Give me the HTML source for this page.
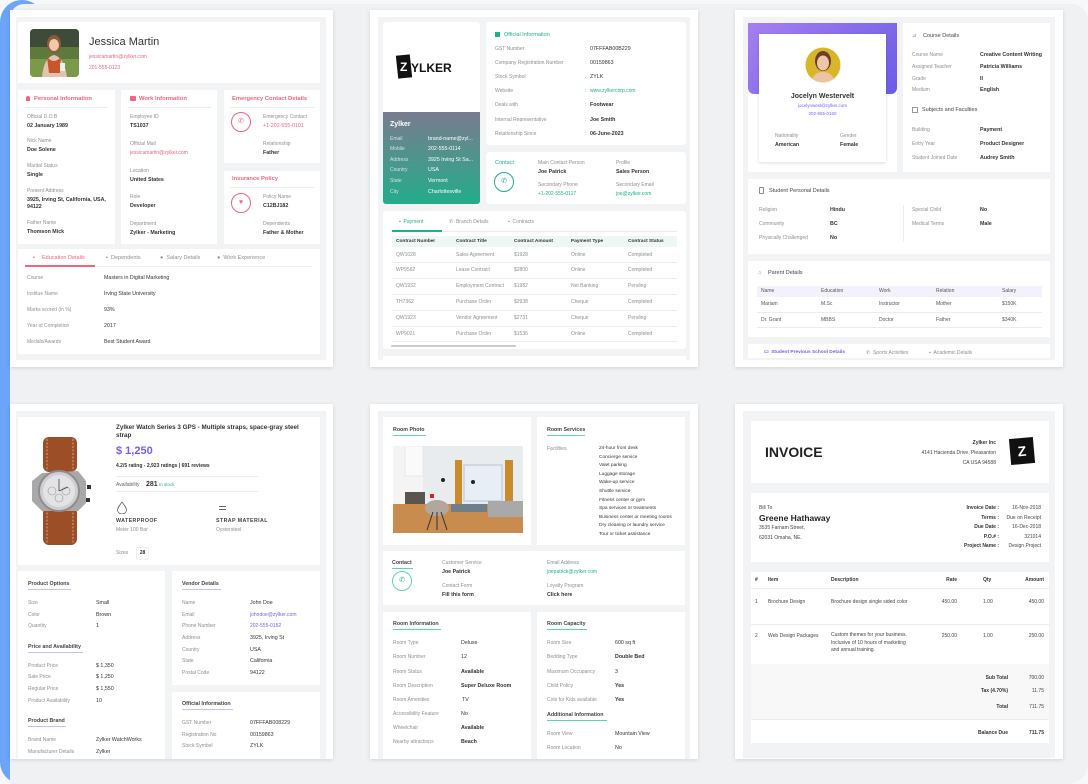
<!DOCTYPE html>
<html><head><meta charset="utf-8">
<style>
*{margin:0;padding:0;box-sizing:border-box}
body{width:1088px;height:784px;position:relative;overflow:hidden;background:#f7f8fa;font-family:"Liberation Sans",sans-serif;color:#333}
.a{position:absolute}
.t{position:absolute;white-space:nowrap;line-height:8px}
.l{font-size:5px;color:#8f8f8f}
.v{font-size:5.3px;color:#333;font-weight:bold}
.pk{color:#f2647d}
.gr{color:#1fb08b}
.pu{color:#7b5cf0}
.w{position:absolute;background:#fff}
.card{position:absolute;background:#fff;box-shadow:0 1px 4px rgba(0,0,0,.12)}
.in{position:absolute;background:#f2f3f4}
.h{font-size:5.8px;font-weight:bold}
.ul{position:absolute;height:1px}
.hl{position:absolute;height:1px;background:#ececec}
</style></head><body>
<div class="a" style="left:0;top:0;width:44px;height:784px;background:#6ba4f9;border-radius:24px"></div>
<div class="a" style="left:10px;top:4px;right:0;bottom:0;background:#f0f1f3;border-radius:14px 16px 20px 0"></div>

<!-- CARD 1 -->
<div class="card" style="left:10px;top:10px;width:323px;height:357px"></div>
<div class="in" style="left:16px;top:17px;width:310px;height:343px"></div>
<div class="w" style="left:18px;top:22px;width:302px;height:61px"></div>
<svg class="a" style="left:30px;top:29px" width="49" height="48"><defs><clipPath id="c1"><rect width="49" height="48" rx="4"/></clipPath></defs><g clip-path="url(#c1)"><rect width="49" height="48" fill="#5d7a3c"/><rect width="49" height="18" fill="#3f4b3a"/><rect x="0" y="30" width="49" height="18" fill="#7a9a4a"/><path d="M12 48 Q14 28 24 26 Q34 28 37 48Z" fill="#e3c2ae"/><ellipse cx="24" cy="15" rx="7" ry="9" fill="#8b5a3a"/><ellipse cx="24" cy="16" rx="5" ry="6" fill="#f1c9a8"/><path d="M17 28 Q24 36 31 28 L30 44 L19 44Z" fill="#c9552e"/><rect x="30" y="34" width="5" height="8" fill="#eee"/></g></svg>
<div class="t" style="left:89px;top:35px;font-size:11px;line-height:14px;color:#333">Jessica Martin</div>
<div class="t l pk" style="left:89px;top:53px">jessicamartin@zylker.com</div>
<div class="t l pk" style="left:89px;top:64px">201-555-0123</div>

<div class="w" style="left:18px;top:90px;width:97px;height:154px"></div>
<div class="w" style="left:121px;top:90px;width:96px;height:154px"></div>
<div class="w" style="left:224px;top:90px;width:96px;height:73px"></div>
<div class="w" style="left:224px;top:171px;width:96px;height:73px"></div>
<div class="a" style="left:26px;top:96px;width:4px;height:5px;background:#f2647d;border-radius:2px 2px 0 0"></div>
<div class="t h pk" style="left:34px;top:95px">Personal Information</div>
<div class="hl" style="left:25px;top:107px;width:83px"></div>
<div class="t l" style="left:27px;top:113px">Official D.O.B</div><div class="t v" style="left:27px;top:122px">02 January 1989</div>
<div class="t l" style="left:27px;top:137px">Nick Name</div><div class="t v" style="left:27px;top:146px">Doe Solene</div>
<div class="t l" style="left:27px;top:162px">Marital Status</div><div class="t v" style="left:27px;top:171px">Single</div>
<div class="t l" style="left:27px;top:187px">Present Address</div><div class="t v" style="left:27px;top:196px">3925, Irving St, California, USA,</div><div class="t v" style="left:27px;top:203px">94122</div>
<div class="t l" style="left:27px;top:219px">Father Name</div><div class="t v" style="left:27px;top:228px">Thomson Mick</div>

<div class="a" style="left:130px;top:96px;width:6px;height:5px;background:#f2647d;border-radius:1px"></div>
<div class="t h pk" style="left:139px;top:95px">Work Information</div>
<div class="hl" style="left:128px;top:107px;width:83px"></div>
<div class="t l" style="left:130px;top:113px">Employee ID</div><div class="t v" style="left:130px;top:122px">TS1037</div>
<div class="t l" style="left:130px;top:140px">Official Mail</div><div class="t l pk" style="left:130px;top:149px">jessicamartin@zylker.com</div>
<div class="t l" style="left:130px;top:167px">Location</div><div class="t v" style="left:130px;top:176px">United States</div>
<div class="t l" style="left:130px;top:193px">Role</div><div class="t v" style="left:130px;top:202px">Developer</div>
<div class="t l" style="left:130px;top:220px">Department</div><div class="t v" style="left:130px;top:229px">Zylker - Marketing</div>

<div class="t h pk" style="left:232px;top:95px">Emergency Contact Details</div>
<div class="hl" style="left:230px;top:107px;width:84px"></div>
<div class="a" style="left:231px;top:112px;width:20px;height:20px;border:1px solid #f2647d;border-radius:50%;color:#f2647d;font-size:7px;text-align:center;line-height:18px">✆</div>
<div class="t l" style="left:263px;top:113px">Emergency Contact</div><div class="t l pk" style="left:263px;top:122px;font-size:5.3px">+1-202-555-0101</div>
<div class="t l" style="left:263px;top:140px">Relationship</div><div class="t v" style="left:263px;top:149px">Father</div>
<div class="t h pk" style="left:232px;top:175px">Insurance Policy</div>
<div class="hl" style="left:230px;top:187px;width:84px"></div>
<div class="a" style="left:231px;top:193px;width:20px;height:20px;border:1px solid #f2647d;border-radius:50%;color:#f2647d;font-size:7px;text-align:center;line-height:18px">♥</div>
<div class="t l" style="left:263px;top:193px">Policy Name</div><div class="t v" style="left:263px;top:202px">C12BJ182</div>
<div class="t l" style="left:263px;top:220px">Dependents</div><div class="t v" style="left:263px;top:229px">Father &amp; Mother</div>

<div class="w" style="left:18px;top:249px;width:302px;height:105px"></div>
<div class="t l pk" style="left:33px;top:254px;font-size:5.5px">▪</div>
<div class="t pk" style="left:42px;top:254px;font-size:5.5px">Education Details</div>
<div class="t l" style="left:106px;top:254px;font-size:5.5px">▪ &nbsp;Dependents</div>
<div class="t l" style="left:160px;top:254px;font-size:5.5px">● &nbsp;Salary Details</div>
<div class="t l" style="left:217px;top:254px;font-size:5.5px">● &nbsp;Work Experience</div>
<div class="hl" style="left:25px;top:266px;width:287px"></div>
<div class="ul" style="left:25px;top:265px;width:70px;height:1.5px;background:#f2647d"></div>
<div class="t l" style="left:27px;top:274px">Course</div><div class="t v" style="left:104px;top:274px;font-weight:normal;color:#333">Masters in Digital Marketing</div>
<div class="t l" style="left:27px;top:290px">Institue Name</div><div class="t v" style="left:104px;top:290px;font-weight:normal">Irving State University</div>
<div class="t l" style="left:27px;top:306px">Marks scored (in %)</div><div class="t v" style="left:104px;top:306px;font-weight:normal">93%</div>
<div class="t l" style="left:27px;top:322px">Year of Completion</div><div class="t v" style="left:104px;top:322px;font-weight:normal">2017</div>
<div class="t l" style="left:27px;top:338px">Medals/Awards</div><div class="t v" style="left:104px;top:338px;font-weight:normal">Best Student Award</div>

<!-- CARD 2 -->
<div class="card" style="left:370px;top:10px;width:328px;height:357px"></div>
<div class="in" style="left:378px;top:17px;width:312px;height:343px"></div>
<div class="w" style="left:383px;top:22px;width:97px;height:182px;border-radius:3px;overflow:hidden"><div class="a" style="left:0;top:90px;width:97px;height:92px;background:linear-gradient(#7a7b8e,#22ad8c)"></div></div>
<div class="a" style="left:397px;top:55px;width:14px;height:23px;background:#111;transform:rotate(-6deg)"></div>
<div class="t" style="left:400px;top:60px;font-size:12px;line-height:14px;color:#fff;font-weight:bold">Z</div>
<div class="t" style="left:411px;top:61px;font-size:12px;line-height:14px;color:#111;font-weight:bold">YLKER</div>
<div class="t" style="left:390px;top:121px;font-size:7px;color:#fff;font-weight:bold">Zylker</div>
<div class="t l" style="left:390px;top:135px;color:#dde">Email</div><div class="t" style="left:428px;top:135px;font-size:5.3px;color:#fff">brand-name@zyl...</div>
<div class="t l" style="left:390px;top:145px;color:#dde">Mobile</div><div class="t" style="left:428px;top:145px;font-size:5.3px;color:#fff">202-555-0114</div>
<div class="t l" style="left:390px;top:156px;color:#dde">Address</div><div class="t" style="left:428px;top:156px;font-size:5.3px;color:#fff">3925 Irving St Sa...</div>
<div class="t l" style="left:390px;top:166px;color:#dde">Country</div><div class="t" style="left:428px;top:166px;font-size:5.3px;color:#fff">USA</div>
<div class="t l" style="left:390px;top:177px;color:#dde">State</div><div class="t" style="left:428px;top:177px;font-size:5.3px;color:#fff">Vermont</div>
<div class="t l" style="left:390px;top:188px;color:#dde">City</div><div class="t" style="left:428px;top:188px;font-size:5.3px;color:#fff">Charlottesville</div>

<div class="w" style="left:486px;top:22px;width:200px;height:123px;border-radius:3px"></div>
<div class="a" style="left:495px;top:32px;width:5px;height:5px;background:#1fb08b"></div>
<div class="t gr" style="left:504px;top:31px;font-size:5.5px">Official Information</div>
<div class="t l" style="left:495px;top:45px">GST Number</div><div class="t l" style="left:585px;top:45px">:</div><div class="t v" style="left:590px;top:45px;font-weight:normal">07FFFAB00B229</div>
<div class="t l" style="left:495px;top:59px">Company Registration Number</div><div class="t l" style="left:585px;top:59px">:</div><div class="t v" style="left:590px;top:59px;font-weight:normal">00159863</div>
<div class="t l" style="left:495px;top:73px">Stock Symbol</div><div class="t l" style="left:585px;top:73px">:</div><div class="t v" style="left:590px;top:73px;font-weight:normal">ZYLK</div>
<div class="t l" style="left:495px;top:87px">Website</div><div class="t l" style="left:585px;top:87px">:</div><div class="t l gr" style="left:590px;top:87px">www.zylkercorp.com</div>
<div class="t l" style="left:495px;top:101px">Deals with</div><div class="t l" style="left:585px;top:101px">:</div><div class="t v" style="left:590px;top:101px">Footwear</div>
<div class="t l" style="left:495px;top:116px">Internal Representative</div><div class="t l" style="left:585px;top:116px">:</div><div class="t v" style="left:590px;top:116px">Joe Smith</div>
<div class="t l" style="left:495px;top:130px">Relationship Since</div><div class="t l" style="left:585px;top:130px">:</div><div class="t v" style="left:590px;top:130px">06-June-2023</div>

<div class="w" style="left:486px;top:152px;width:200px;height:52px;border-radius:3px"></div>
<div class="t gr" style="left:495px;top:159px;font-size:5.5px">Contact</div>
<div class="a" style="left:494px;top:172px;width:20px;height:20px;border:1px solid #1fb08b;border-radius:50%;color:#1fb08b;font-size:7px;text-align:center;line-height:18px">✆</div>
<div class="t l" style="left:538px;top:159px">Main Contact Person</div><div class="t v" style="left:538px;top:168px">Joe Patrick</div>
<div class="t l" style="left:538px;top:181px">Secondary Phone</div><div class="t l gr" style="left:538px;top:190px">+1-202-555-0117</div>
<div class="t l" style="left:616px;top:159px">Profile</div><div class="t v" style="left:616px;top:168px">Sales Person</div>
<div class="t l" style="left:616px;top:181px">Secondary Email</div><div class="t l gr" style="left:616px;top:190px">joe@zylker.com</div>

<div class="w" style="left:383px;top:211px;width:303px;height:138px;border-radius:3px"></div>
<div class="t gr" style="left:399px;top:218px;font-size:5px">▪ &nbsp;Payment</div>
<div class="t l" style="left:449px;top:218px">✆ &nbsp;Branch Details</div>
<div class="t l" style="left:508px;top:218px">▪ &nbsp;Contracts</div>
<div class="hl" style="left:392px;top:231px;width:285px"></div>
<div class="ul" style="left:392px;top:230px;width:50px;height:1.5px;background:#1fb08b"></div>
<div class="a" style="left:392px;top:236px;width:285px;height:11px;background:#eef7f4"></div>
<div class="t v" style="left:396px;top:238px;font-size:4.8px">Contract Number</div><div class="t v" style="left:456px;top:238px;font-size:4.8px">Contract Title</div><div class="t v" style="left:514px;top:238px;font-size:4.8px">Contract Amount</div><div class="t v" style="left:571px;top:238px;font-size:4.8px">Payment Type</div><div class="t v" style="left:628px;top:238px;font-size:4.8px">Contract Status</div>
<div class="t l" style="left:396px;top:251px">QW1028</div><div class="t l" style="left:456px;top:251px">Sales Agreement</div><div class="t l" style="left:514px;top:251px">$1928</div><div class="t l" style="left:571px;top:251px">Online</div><div class="t l" style="left:628px;top:251px">Completed</div>
<div class="hl" style="left:392px;top:262px;width:285px"></div>
<div class="t l" style="left:396px;top:266px">WP9562</div><div class="t l" style="left:456px;top:266px">Lease Contract</div><div class="t l" style="left:514px;top:266px">$2800</div><div class="t l" style="left:571px;top:266px">Online</div><div class="t l" style="left:628px;top:266px">Completed</div>
<div class="hl" style="left:392px;top:278px;width:285px"></div>
<div class="t l" style="left:396px;top:282px">QW1932</div><div class="t l" style="left:456px;top:282px">Employment Contract</div><div class="t l" style="left:514px;top:282px">$1982</div><div class="t l" style="left:571px;top:282px">Net Banking</div><div class="t l" style="left:628px;top:282px">Pending</div>
<div class="hl" style="left:392px;top:294px;width:285px"></div>
<div class="t l" style="left:396px;top:298px">TH7362</div><div class="t l" style="left:456px;top:298px">Purchase Order</div><div class="t l" style="left:514px;top:298px">$2938</div><div class="t l" style="left:571px;top:298px">Cheque</div><div class="t l" style="left:628px;top:298px">Completed</div>
<div class="hl" style="left:392px;top:310px;width:285px"></div>
<div class="t l" style="left:396px;top:314px">QW1923</div><div class="t l" style="left:456px;top:314px">Vendor Agreement</div><div class="t l" style="left:514px;top:314px">$2731</div><div class="t l" style="left:571px;top:314px">Cheque</div><div class="t l" style="left:628px;top:314px">Pending</div>
<div class="hl" style="left:392px;top:326px;width:285px"></div>
<div class="t l" style="left:396px;top:330px">WP9021</div><div class="t l" style="left:456px;top:330px">Purchase Order</div><div class="t l" style="left:514px;top:330px">$1536</div><div class="t l" style="left:571px;top:330px">Online</div><div class="t l" style="left:628px;top:330px">Completed</div>
<div class="hl" style="left:392px;top:341px;width:285px"></div>
<div class="a" style="left:391px;top:345px;width:125px;height:2px;background:#ccc;border-radius:1px"></div>
<div class="w" style="left:383px;top:356px;width:303px;height:4px"></div>

<!-- CARD 3 -->
<div class="card" style="left:735px;top:10px;width:328px;height:357px"></div>
<div class="in" style="left:743px;top:17px;width:312px;height:343px"></div>
<div class="w" style="left:748px;top:23px;width:149px;height:149px"></div>
<div class="a" style="left:748px;top:23px;width:149px;height:71px;background:linear-gradient(135deg,#a57ff2,#6b5ce6);border-radius:0 0 6px 6px"></div>
<div class="w" style="left:759px;top:34px;width:127px;height:128px;box-shadow:0 1px 3px rgba(0,0,0,.15)"></div>
<svg class="a" style="left:805px;top:47px" width="36" height="36"><defs><clipPath id="c2"><circle cx="18" cy="18" r="17.5"/></clipPath></defs><g clip-path="url(#c2)"><rect width="36" height="36" fill="#d9b52a"/><ellipse cx="18" cy="14" rx="8" ry="10" fill="#6b4028"/><ellipse cx="18" cy="16" rx="6" ry="7.5" fill="#efc7a8"/><path d="M6 36 Q8 25 18 25 Q28 25 30 36Z" fill="#edc3a2"/></g></svg>
<div class="t" style="left:759px;top:93px;width:127px;text-align:center;font-size:7px;font-weight:bold;color:#333">Jocelyn Westervelt</div>
<div class="t l pu" style="left:759px;top:102px;width:127px;text-align:center;font-size:4.5px">jocelynwest@zylker.com</div>
<div class="t l pu" style="left:759px;top:110px;width:127px;text-align:center;font-size:4.5px">202-555-0160</div>
<div class="t l" style="left:775px;top:132px">Nationality</div><div class="t v" style="left:775px;top:141px">American</div>
<div class="t l" style="left:840px;top:132px">Gender</div><div class="t v" style="left:840px;top:141px">Female</div>

<div class="w" style="left:903px;top:23px;width:147px;height:149px"></div>
<div class="t l" style="left:912px;top:32px;font-size:5.5px">⊿</div>
<div class="t" style="left:923px;top:32px;font-size:5.5px;color:#444">Course Details</div>
<div class="t l" style="left:912px;top:51px">Course Name</div><div class="t v" style="left:980px;top:51px">Creative Content Writing</div>
<div class="t l" style="left:912px;top:63px">Assigned Teacher</div><div class="t v" style="left:980px;top:63px">Patricia Williams</div>
<div class="t l" style="left:912px;top:75px">Grade</div><div class="t v" style="left:980px;top:75px">II</div>
<div class="t l" style="left:912px;top:86px">Medium</div><div class="t v" style="left:980px;top:86px">English</div>
<div class="a" style="left:912px;top:107px;width:6px;height:6px;border:1px solid #999"></div>
<div class="t" style="left:922px;top:106px;font-size:5.5px;color:#444">Subjects and Faculties</div>
<div class="t l" style="left:912px;top:126px">Building</div><div class="t v" style="left:980px;top:126px">Payment</div>
<div class="t l" style="left:912px;top:140px">Entry Year</div><div class="t v" style="left:980px;top:140px">Product Designer</div>
<div class="t l" style="left:912px;top:154px">Student Joined Date</div><div class="t v" style="left:980px;top:154px">Audrey Smith</div>

<div class="w" style="left:748px;top:179px;width:302px;height:75px"></div>
<div class="a" style="left:759px;top:187px;width:5px;height:7px;border:1px solid #888;border-radius:1px"></div>
<div class="t" style="left:769px;top:187px;font-size:5.5px;color:#444">Student Personal Details</div>
<div class="t l" style="left:759px;top:206px">Religion</div><div class="t v" style="left:830px;top:206px">Hindu</div>
<div class="t l" style="left:759px;top:220px">Community</div><div class="t v" style="left:830px;top:220px">BC</div>
<div class="t l" style="left:759px;top:234px">Physically Challenged</div><div class="t v" style="left:830px;top:234px">No</div>
<div class="a" style="left:903px;top:205px;width:1px;height:37px;background:#eee"></div>
<div class="t l" style="left:912px;top:206px">Special Child</div><div class="t v" style="left:980px;top:206px">No</div>
<div class="t l" style="left:912px;top:220px">Medical Terms</div><div class="t v" style="left:980px;top:220px">Male</div>

<div class="w" style="left:748px;top:261px;width:302px;height:76px"></div>
<div class="t l" style="left:758px;top:269px;font-size:5.5px">⌂</div>
<div class="t" style="left:768px;top:269px;font-size:5.5px;color:#444">Parent Details</div>
<div class="a" style="left:757px;top:286px;width:285px;height:11px;background:#f3f1fd"></div>
<div class="t l" style="left:761px;top:287px;color:#555">Name</div><div class="t l" style="left:821px;top:287px;color:#555">Education</div><div class="t l" style="left:879px;top:287px;color:#555">Work</div><div class="t l" style="left:936px;top:287px;color:#555">Relation</div><div class="t l" style="left:1002px;top:287px;color:#555">Salary</div>
<div class="t l" style="left:761px;top:300px;color:#555">Mariam</div><div class="t l" style="left:821px;top:300px;color:#555">M.Sc</div><div class="t l" style="left:879px;top:300px;color:#555">Instructor</div><div class="t l" style="left:936px;top:300px;color:#555">Mother</div><div class="t l" style="left:1002px;top:300px;color:#555">$150K</div>
<div class="hl" style="left:757px;top:312px;width:285px"></div>
<div class="t l" style="left:761px;top:316px;color:#555">Dr. Grant</div><div class="t l" style="left:821px;top:316px;color:#555">MBBS</div><div class="t l" style="left:879px;top:316px;color:#555">Doctor</div><div class="t l" style="left:936px;top:316px;color:#555">Father</div><div class="t l" style="left:1002px;top:316px;color:#555">$340K</div>
<div class="hl" style="left:757px;top:327px;width:285px"></div>
<div class="w" style="left:748px;top:344px;width:302px;height:14px"></div>
<div class="t pu" style="left:764px;top:349px;font-size:4.8px;font-weight:bold">▭ &nbsp;Student Previous School Details</div>
<div class="t l" style="left:866px;top:349px">✆ &nbsp;Sports Activities</div>
<div class="t l" style="left:929px;top:349px">▪ &nbsp;Academic Details</div>

<!-- CARD 4 -->
<div class="card" style="left:10px;top:404px;width:323px;height:355px"></div>
<div class="in" style="left:16px;top:411px;width:310px;height:348px"></div>
<div class="w" style="left:18px;top:417px;width:302px;height:148px"></div>
<svg class="a" style="left:28px;top:435px" width="70" height="112">
<rect x="15" y="2" width="34" height="35" rx="6" fill="#9c4f27"/><rect x="15" y="72" width="34" height="38" rx="6" fill="#9c4f27"/>
<path d="M19 4 V36 M45 4 V36 M19 74 V108 M45 74 V108" stroke="#e9c6a5" stroke-width=".7" stroke-dasharray="2 1.5"/>
<path d="M14 38 L50 36 L58 46 L58 68 L50 76 L14 76 L4 66 L4 46Z" fill="#a8a8ab"/>
<circle cx="31" cy="56" r="20" fill="#cfcfd1" stroke="#8d8d90" stroke-width="2"/>
<circle cx="31" cy="56" r="16" fill="#e3e3e5"/>
<circle cx="24" cy="56" r="4" fill="none" stroke="#999" stroke-width=".6"/><circle cx="38" cy="56" r="4" fill="none" stroke="#999" stroke-width=".6"/><circle cx="31" cy="63" r="4" fill="none" stroke="#999" stroke-width=".6"/>
<path d="M31 56 L31 44 M31 56 L40 52" stroke="#444" stroke-width=".8"/>
<rect x="59" y="50" width="4" height="4" fill="#333"/><rect x="58" y="63" width="4" height="4" fill="#333"/><rect x="59" y="32" width="0" height="0"/></svg>
<div class="t" style="left:116px;top:424px;font-size:6.3px;font-weight:bold;color:#333;line-height:8px">Zylker Watch Series 3 GPS - Multiple straps, space-gray steel<br>strap</div>
<div class="t pu" style="left:116px;top:444px;font-size:11px;line-height:14px;font-weight:bold">$ 1,250</div>
<div class="t v" style="left:116px;top:462px;font-size:5px">4.2/5 rating - 2,923 ratings | 691 reviews</div>
<div class="hl" style="left:116px;top:476px;width:142px"></div>
<div class="t l" style="left:116px;top:481px;color:#666">Availability</div>
<div class="t v" style="left:146px;top:480px;font-size:7px;line-height:9px">281</div>
<div class="t l gr" style="left:159px;top:481px;font-size:4.5px">In stock</div>
<div class="hl" style="left:116px;top:491px;width:142px"></div>
<svg class="a" style="left:116px;top:501px" width="12" height="13"><path d="M6 1 C3 5 1.5 7 1.5 9 A4.5 4 0 0 0 10.5 9 C10.5 7 9 5 6 1Z" fill="none" stroke="#666" stroke-width=".8"/></svg>
<div class="a" style="left:219px;top:506px;width:7px;height:1px;background:#666"></div><div class="a" style="left:219px;top:509px;width:7px;height:1px;background:#666"></div>
<div class="t v" style="left:116px;top:517px;font-size:5.3px;letter-spacing:.4px;color:#444">WATERPROOF</div>
<div class="t l" style="left:116px;top:526px">Meter 100 Bar</div>
<div class="t v" style="left:216px;top:517px;font-size:5.3px;letter-spacing:.4px;color:#444">STRAP MATERIAL</div>
<div class="t l" style="left:216px;top:526px">Oystersteel</div>
<div class="t l" style="left:116px;top:549px">Sizes</div>
<div class="a" style="left:136px;top:547px;width:13px;height:13px;border:1px solid #eee;border-radius:2px;font-size:5px;font-weight:bold;text-align:center;line-height:11px">28</div>

<div class="w" style="left:18px;top:571px;width:147px;height:188px"></div>
<div class="w" style="left:172px;top:571px;width:148px;height:114px"></div>
<div class="w" style="left:172px;top:692px;width:148px;height:67px"></div>
<div class="t v" style="left:28px;top:580px;color:#444">Product Options</div><div class="ul" style="left:28px;top:589px;width:43px;background:#cbbcf8"></div>
<div class="t l" style="left:28px;top:599px">Size</div><div class="t v" style="left:96px;top:599px;font-weight:normal">Small</div>
<div class="t l" style="left:28px;top:611px">Color</div><div class="t v" style="left:96px;top:611px;font-weight:normal">Brown</div>
<div class="t l" style="left:28px;top:622px">Quantity</div><div class="t v" style="left:96px;top:622px;font-weight:normal">1</div>
<div class="t v" style="left:28px;top:643px;color:#444">Price and Availability</div><div class="ul" style="left:28px;top:652px;width:55px;background:#cbbcf8"></div>
<div class="t l" style="left:28px;top:662px">Product Price</div><div class="t v" style="left:96px;top:662px;font-weight:normal">$ 1,350</div>
<div class="t l" style="left:28px;top:673px">Sale Price</div><div class="t v" style="left:96px;top:673px;font-weight:normal">$ 1,250</div>
<div class="t l" style="left:28px;top:685px">Regular Price</div><div class="t v" style="left:96px;top:685px;font-weight:normal">$ 1,550</div>
<div class="t l" style="left:28px;top:697px">Product Availability</div><div class="t v" style="left:96px;top:697px;font-weight:normal">10</div>
<div class="t v" style="left:28px;top:717px;color:#444">Product Brand</div><div class="ul" style="left:28px;top:726px;width:38px;background:#cbbcf8"></div>
<div class="t l" style="left:28px;top:736px">Brand Name</div><div class="t v" style="left:96px;top:736px;font-weight:normal">Zylker WatchWorks</div>
<div class="t l" style="left:28px;top:748px">Manufacturer Details</div><div class="t v" style="left:96px;top:748px;font-weight:normal">Zylker</div>

<div class="t v" style="left:182px;top:580px;color:#444">Vendor Details</div><div class="ul" style="left:182px;top:589px;width:39px;background:#cbbcf8"></div>
<div class="t l" style="left:182px;top:599px">Name</div><div class="t v" style="left:250px;top:599px;font-weight:normal">John Doe</div>
<div class="t l" style="left:182px;top:611px">Email</div><div class="t l pu" style="left:250px;top:611px">johndoe@zylker.com</div>
<div class="t l" style="left:182px;top:622px">Phone Number</div><div class="t l pu" style="left:250px;top:622px">202-555-0152</div>
<div class="t l" style="left:182px;top:634px">Address</div><div class="t v" style="left:250px;top:634px;font-weight:normal">3925, Irving St</div>
<div class="t l" style="left:182px;top:646px">Country</div><div class="t v" style="left:250px;top:646px;font-weight:normal">USA</div>
<div class="t l" style="left:182px;top:657px">State</div><div class="t v" style="left:250px;top:657px;font-weight:normal">California</div>
<div class="t l" style="left:182px;top:669px">Postal Code</div><div class="t v" style="left:250px;top:669px;font-weight:normal">94122</div>
<div class="t v" style="left:182px;top:700px;color:#444">Official Information</div><div class="ul" style="left:182px;top:709px;width:51px;background:#cbbcf8"></div>
<div class="t l" style="left:182px;top:719px">GST Number</div><div class="t v" style="left:250px;top:719px;font-weight:normal">07FFFAB008229</div>
<div class="t l" style="left:182px;top:731px">Registration No</div><div class="t v" style="left:250px;top:731px;font-weight:normal">00159863</div>
<div class="t l" style="left:182px;top:742px">Stock Symbol</div><div class="t v" style="left:250px;top:742px;font-weight:normal">ZYLK</div>

<!-- CARD 5 -->
<div class="card" style="left:370px;top:404px;width:328px;height:355px"></div>
<div class="in" style="left:378px;top:411px;width:312px;height:348px"></div>
<div class="w" style="left:383px;top:417px;width:148px;height:128px"></div>
<div class="w" style="left:537px;top:417px;width:148px;height:128px"></div>
<div class="t v" style="left:393px;top:426px;color:#444">Room Photo</div><div class="ul" style="left:393px;top:435px;width:33px;background:#5fd3b6"></div>
<svg class="a" style="left:393px;top:446px" width="130" height="87">
<rect width="130" height="87" fill="#e9ecef"/>
<rect x="0" y="0" width="30" height="60" fill="#f4f4f4"/><rect x="12" y="0" width="18" height="30" fill="#fafafa" stroke="#ddd" stroke-width=".5"/>
<rect x="12" y="46" width="20" height="13" fill="#5a5550"/>
<rect x="70" y="18" width="40" height="38" fill="#cfd8e2"/><rect x="72" y="20" width="36" height="34" fill="#e7eef5"/>
<rect x="62" y="14" width="7" height="46" fill="#c98b2b"/><rect x="112" y="14" width="8" height="46" fill="#c98b2b"/>
<rect x="0" y="58" width="130" height="29" fill="#c88c4e"/>
<rect x="95" y="55" width="35" height="16" fill="#a9a9a9"/><rect x="58" y="58" width="36" height="8" fill="#6e7f8c"/>
<ellipse cx="44" cy="62" rx="12" ry="8" fill="#b1a79e"/><path d="M40 66 L34 84 M48 66 L54 84 M44 66 L44 84" stroke="#333" stroke-width="1"/>
<rect x="37" y="48" width="4" height="4" fill="#d22"/><circle cx="50" cy="34" r="2" fill="#222"/><circle cx="80" cy="36" r="2" fill="#222"/></svg>
<div class="t v" style="left:547px;top:426px;color:#444">Room Services</div><div class="ul" style="left:547px;top:435px;width:38px;background:#5fd3b6"></div>
<div class="t l" style="left:547px;top:445px">Facilities</div>
<div class="t v" style="left:599px;top:445px;font-weight:normal;font-size:4.8px;line-height:8.6px">24-hour front desk<br>Concierge service<br>Valet parking<br>Luggage storage<br>Wake-up service<br>Shuttle service<br>Fitness center or gym<br>Spa services or treatments<br>Business center or meeting rooms<br>Dry cleaning or laundry service<br>Tour or ticket assistance</div>

<div class="w" style="left:383px;top:551px;width:302px;height:54px"></div>
<div class="t v" style="left:392px;top:559px;color:#444">Contact</div><div class="ul" style="left:392px;top:568px;width:21px;background:#5fd3b6"></div>
<div class="a" style="left:392px;top:571px;width:20px;height:20px;border:1px solid #5fd3b6;border-radius:50%;color:#1fb08b;font-size:7px;text-align:center;line-height:18px">✆</div>
<div class="t l" style="left:442px;top:559px">Customer Service</div><div class="t v" style="left:442px;top:568px">Joe Patrick</div>
<div class="t l" style="left:442px;top:582px">Contact Form</div><div class="t v" style="left:442px;top:591px">Fill this form</div>
<div class="t l" style="left:547px;top:559px">Email Address</div><div class="t l gr" style="left:547px;top:568px">joepatrick@zylker.com</div>
<div class="t l" style="left:547px;top:582px">Loyalty Program</div><div class="t v" style="left:547px;top:591px">Click here</div>

<div class="w" style="left:383px;top:612px;width:148px;height:147px"></div>
<div class="w" style="left:537px;top:612px;width:148px;height:147px"></div>
<div class="t v" style="left:393px;top:620px;color:#444">Room Information</div><div class="ul" style="left:393px;top:629px;width:48px;background:#5fd3b6"></div>
<div class="t l" style="left:393px;top:639px">Room Type</div><div class="t v" style="left:461px;top:639px;font-weight:normal">Deluxe</div>
<div class="t l" style="left:393px;top:653px">Room Number</div><div class="t v" style="left:461px;top:653px;font-weight:normal">12</div>
<div class="t l" style="left:393px;top:668px">Room Status</div><div class="t v" style="left:461px;top:668px">Available</div>
<div class="t l" style="left:393px;top:682px">Room Description</div><div class="t v" style="left:461px;top:682px">Super Deluxe Room</div>
<div class="t l" style="left:393px;top:696px">Room Amenities</div><div class="t v" style="left:462px;top:696px;font-weight:normal">TV</div>
<div class="t l" style="left:393px;top:710px">Accessibility Feature</div><div class="t v" style="left:461px;top:710px;font-weight:normal">No</div>
<div class="t l" style="left:393px;top:724px">Wheelchair</div><div class="t v" style="left:461px;top:724px">Available</div>
<div class="t l" style="left:393px;top:738px">Nearby attractions</div><div class="t v" style="left:461px;top:738px">Beach</div>
<div class="t v" style="left:547px;top:620px;color:#444">Room Capacity</div><div class="ul" style="left:547px;top:629px;width:40px;background:#5fd3b6"></div>
<div class="t l" style="left:547px;top:639px">Room Size</div><div class="t v" style="left:615px;top:639px;font-weight:normal">600 sq ft</div>
<div class="t l" style="left:547px;top:653px">Bedding Type</div><div class="t v" style="left:615px;top:653px">Double Bed</div>
<div class="t l" style="left:547px;top:668px">Maximum Occupancy</div><div class="t v" style="left:615px;top:668px;font-weight:normal">3</div>
<div class="t l" style="left:547px;top:682px">Child Policy</div><div class="t v" style="left:615px;top:682px">Yes</div>
<div class="t l" style="left:547px;top:696px">Cots for Kids available</div><div class="t v" style="left:615px;top:696px">Yes</div>
<div class="t v" style="left:547px;top:711px;color:#444">Additional Information</div><div class="ul" style="left:547px;top:720px;width:60px;background:#5fd3b6"></div>
<div class="t l" style="left:547px;top:730px">Room View</div><div class="t v" style="left:615px;top:730px;font-weight:normal">Mountain View</div>
<div class="t l" style="left:547px;top:744px">Room Location</div><div class="t v" style="left:615px;top:744px;font-weight:normal">No</div>

<!-- CARD 6 -->
<div class="card" style="left:735px;top:404px;width:328px;height:355px"></div>
<div class="in" style="left:743px;top:411px;width:312px;height:347px"></div>
<div class="w" style="left:751px;top:421px;width:298px;height:62px"></div>
<div class="t" style="left:765px;top:444px;font-size:14px;line-height:16px;font-weight:bold;color:#222">INVOICE</div>
<div class="t" style="left:900px;top:439px;width:96px;text-align:right;font-size:5px;font-weight:bold">Zylker Inc</div>
<div class="t" style="left:880px;top:449px;width:116px;text-align:right;font-size:5px;color:#444">4141 Hacienda Drive, Pleasanton</div>
<div class="t" style="left:880px;top:459px;width:116px;text-align:right;font-size:5px;color:#444">CA USA 94588</div>
<div class="a" style="left:1010px;top:438px;width:24px;height:26px;background:#111;transform:rotate(-5deg);color:#fff;font-size:14px;font-weight:bold;text-align:center;line-height:26px">Z</div>

<div class="w" style="left:751px;top:493px;width:298px;height:69px"></div>
<div class="t" style="left:759px;top:504px;font-size:5px;color:#444">Bill To</div>
<div class="t" style="left:759px;top:513px;font-size:8.5px;line-height:11px;font-weight:bold;color:#222">Greene Hathaway</div>
<div class="t" style="left:759px;top:524px;font-size:5px;color:#444">3535 Farnam Street,</div>
<div class="t" style="left:759px;top:534px;font-size:5px;color:#444">62031 Omaha, NE.</div>
<div class="t" style="left:900px;top:504px;width:99px;text-align:right;font-size:5px;font-weight:bold;line-height:9.5px">Invoice Date :<br>Terms :<br>Due Date :<br>P.O.# :<br>Project Name :</div>
<div class="t" style="left:1000px;top:504px;width:41px;text-align:right;font-size:5px;color:#444;line-height:9.5px">16-Nov-2018<br>Due on Receipt<br>16-Dec-2018<br>321014<br>Design Project</div>

<div class="w" style="left:751px;top:572px;width:298px;height:171px"></div>
<div class="t" style="left:755px;top:576px;font-size:5px;font-weight:bold">#</div>
<div class="t" style="left:768px;top:576px;font-size:5px;font-weight:bold">Item</div>
<div class="t" style="left:831px;top:576px;font-size:5px;font-weight:bold">Description</div>
<div class="t" style="left:930px;top:576px;width:27px;text-align:right;font-size:5px;font-weight:bold">Rate</div>
<div class="t" style="left:983px;top:576px;font-size:5px;font-weight:bold">Qty</div>
<div class="t" style="left:1010px;top:576px;width:34px;text-align:right;font-size:5px;font-weight:bold">Amount</div>
<div class="hl" style="left:751px;top:588px;width:298px"></div>
<div class="t" style="left:755px;top:598px;font-size:5px;color:#444">1</div>
<div class="t" style="left:768px;top:598px;font-size:5px;color:#444">Brochure Design</div>
<div class="t" style="left:831px;top:598px;font-size:5px;color:#444">Brochure design single sided color</div>
<div class="t" style="left:930px;top:598px;width:27px;text-align:right;font-size:5px;color:#444">450.00</div>
<div class="t" style="left:983px;top:598px;font-size:5px;color:#444">1.00</div>
<div class="t" style="left:1010px;top:598px;width:34px;text-align:right;font-size:5px;color:#444">450.00</div>
<div class="hl" style="left:751px;top:624px;width:298px"></div>
<div class="t" style="left:755px;top:632px;font-size:5px;color:#444">2</div>
<div class="t" style="left:768px;top:632px;font-size:5px;color:#444">Web Design Packages</div>
<div class="t" style="left:831px;top:632px;font-size:5px;color:#444;line-height:7.5px">Custom themes for your business.<br>Inclusive of 10 hours of marketing<br>and annual training.</div>
<div class="t" style="left:930px;top:632px;width:27px;text-align:right;font-size:5px;color:#444">250.00</div>
<div class="t" style="left:983px;top:632px;font-size:5px;color:#444">1.00</div>
<div class="t" style="left:1010px;top:632px;width:34px;text-align:right;font-size:5px;color:#444">250.00</div>
<div class="a" style="left:751px;top:664px;width:298px;height:55px;background:#f8f8f8"></div>
<div class="t" style="left:960px;top:674px;width:48px;text-align:right;font-size:5px;font-weight:bold">Sub Total</div><div class="t" style="left:1010px;top:674px;width:34px;text-align:right;font-size:5px;color:#444">700.00</div>
<div class="t" style="left:960px;top:687px;width:48px;text-align:right;font-size:5px;font-weight:bold">Tax (4.70%)</div><div class="t" style="left:1010px;top:687px;width:34px;text-align:right;font-size:5px;color:#444">11.75</div>
<div class="t" style="left:960px;top:703px;width:48px;text-align:right;font-size:5px;font-weight:bold">Total</div><div class="t" style="left:1010px;top:703px;width:34px;text-align:right;font-size:5px;color:#444">711.75</div>
<div class="hl" style="left:751px;top:719px;width:298px"></div>
<div class="t" style="left:950px;top:729px;width:58px;text-align:right;font-size:5px;font-weight:bold">Balance Due</div><div class="t" style="left:1010px;top:729px;width:34px;text-align:right;font-size:5px;font-weight:bold">711.75</div>
</body></html>
